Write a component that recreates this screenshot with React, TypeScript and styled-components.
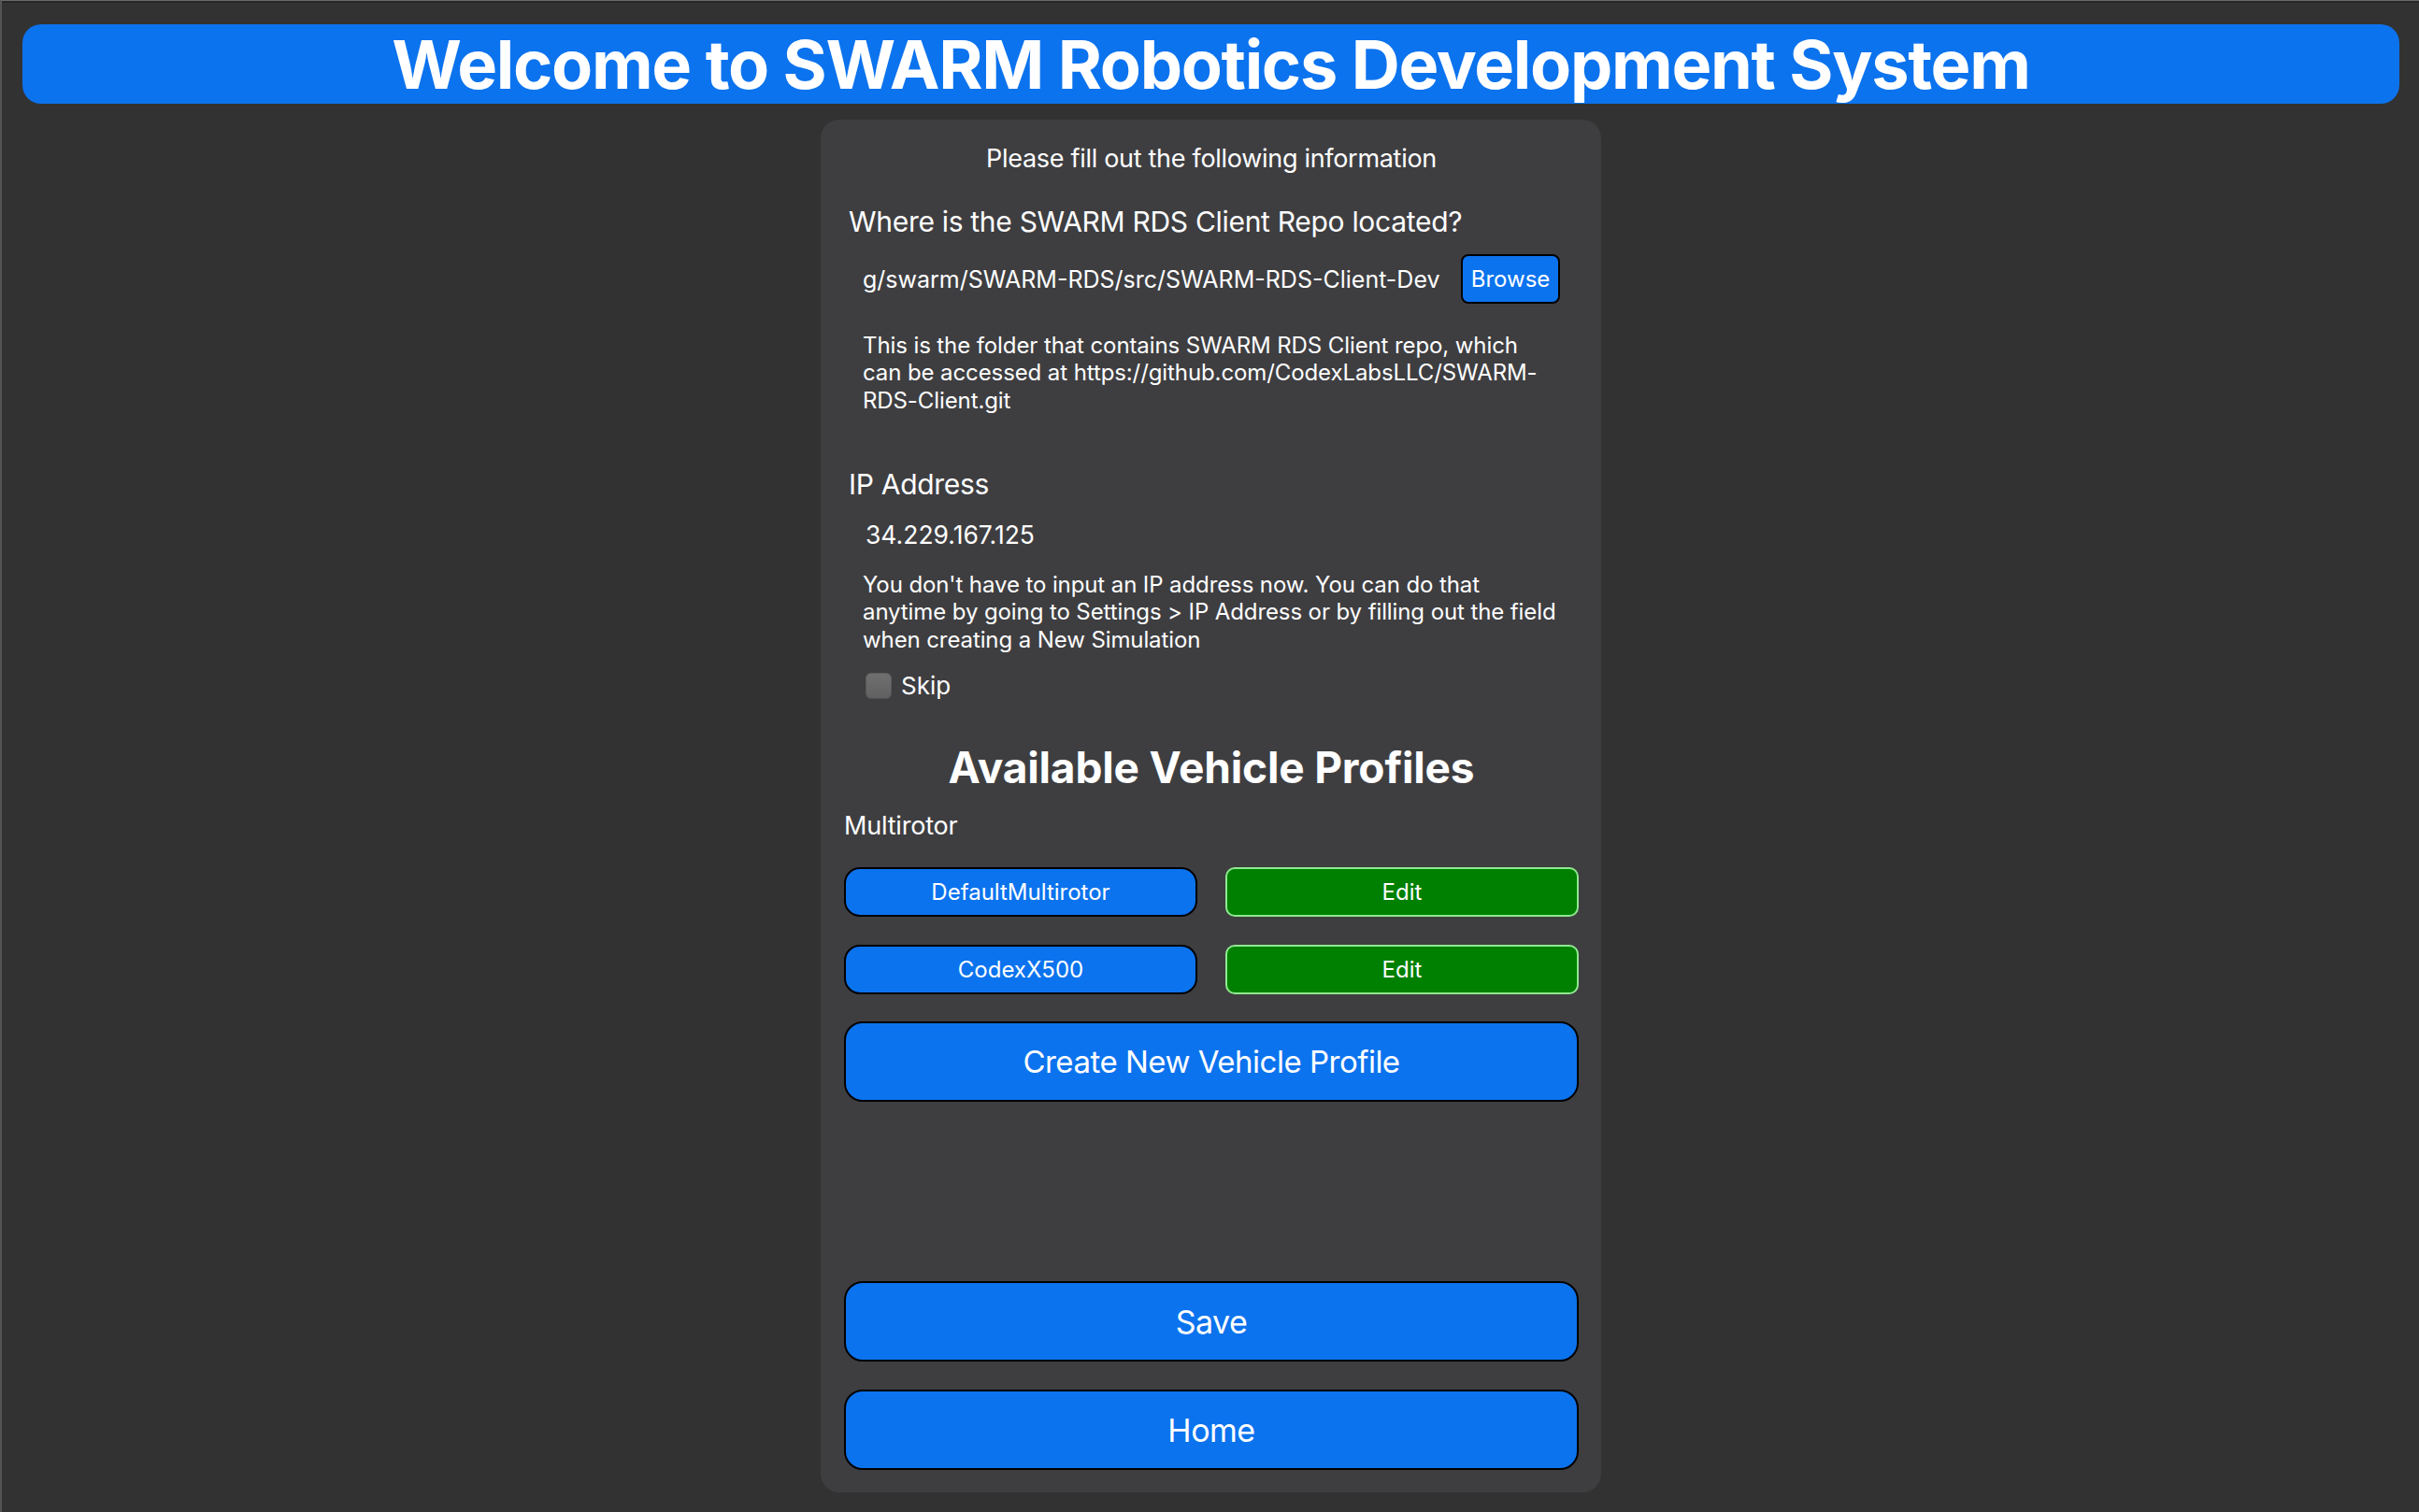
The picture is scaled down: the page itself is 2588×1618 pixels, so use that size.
import React from "react";
import styled, { createGlobalStyle } from "styled-components";

const GlobalStyle = createGlobalStyle`
  html, body {
    margin: 0;
    padding: 0;
    background: #323232;
  }
  body {
    font-family: Inter, "Liberation Sans", "DejaVu Sans", sans-serif;
    color: #ffffff;
    -webkit-font-smoothing: antialiased;
  }
  *, *::before, *::after {
    box-sizing: border-box;
  }
`;

const BLUE = "#0c73ee";

const Frame = styled.div`
  min-height: 100vh;
  background: #323232;
  border-top: 1px solid #6b6b6b;
  border-left: 2px solid #535353;
  box-shadow: inset 0 2px 0 #272727;
  padding: 25px 21px 0 22px;
  overflow: hidden;
`;

const Header = styled.header`
  height: 85px;
  border-radius: 20px;
  background: ${BLUE};
  display: flex;
  align-items: center;
  justify-content: center;
`;

const HeaderTitle = styled.h1`
  margin: 0;
  font-size: 72px;
  font-weight: 700;
  line-height: 85px;
  letter-spacing: -1.3px;
  color: #ffffff;
  white-space: nowrap;
`;

const Panel = styled.main`
  width: 835px;
  height: 1469px;
  margin: 17px auto 0;
  background: #3e3e41;
  border-radius: 20px;
  padding: 25px 24px 24px 25px;
  display: flex;
  flex-direction: column;
`;

const Intro = styled.p`
  margin: 0;
  font-size: 27px;
  line-height: 34px;
  letter-spacing: -0.3px;
  text-align: center;
`;

const FieldLabel = styled.h2<{ $mt: number }>`
  margin: ${(p) => p.$mt}px 0 0;
  padding-left: 5px;
  font-size: 30px;
  font-weight: 400;
  line-height: 38px;
  letter-spacing: -0.3px;
`;

const Indented = styled.div<{ $mt: number }>`
  margin-top: ${(p) => p.$mt}px;
  padding: 0 20px;
`;

const PathRow = styled.div`
  display: flex;
  align-items: center;
  gap: 20px;
  height: 53px;
`;

const PathText = styled.div`
  flex: 1;
  min-width: 0;
  font-size: 25px;
  line-height: 32px;
  white-space: nowrap;
`;

const BrowseButton = styled.button`
  flex: none;
  width: 106px;
  height: 53px;
  padding: 0;
  background: ${BLUE};
  border: 2px solid #000000;
  border-radius: 8px;
  color: #ffffff;
  font-family: inherit;
  font-size: 24px;
`;

const Hint = styled.p`
  margin: 0;
  font-size: 24px;
  line-height: 29.5px;
  letter-spacing: -0.1px;
  white-space: nowrap;
`;

const IpText = styled.div`
  margin-left: 3px;
  font-size: 26.5px;
  line-height: 32px;
`;

const CheckRow = styled.label`
  display: flex;
  align-items: center;
  gap: 10px;
  height: 28px;
  margin-left: 3px;
  font-size: 26px;
  line-height: 28px;
`;

const CheckBox = styled.span`
  width: 28px;
  height: 28px;
  border-radius: 6px;
  background: linear-gradient(#707070, #606060);
  box-shadow: inset 0 0 0 1px rgba(0, 0, 0, 0.15);
`;

const ProfilesTitle = styled.h2`
  margin: 45px 0 0;
  font-size: 46px;
  font-weight: 700;
  line-height: 56px;
  letter-spacing: -0.15px;
  text-align: center;
`;

const GroupLabel = styled.h3`
  margin: 18px 0 0;
  font-size: 27px;
  font-weight: 400;
  line-height: 34px;
  letter-spacing: -0.2px;
`;

const ProfileGrid = styled.div`
  margin-top: 27px;
  display: grid;
  grid-template-columns: 1fr 1fr;
  column-gap: 30px;
  row-gap: 30px;
`;

const ProfileButton = styled.button<{ $edit?: boolean }>`
  height: 53px;
  padding: 0;
  background: ${(p) => (p.$edit ? "#008000" : BLUE)};
  border: 2px solid ${(p) => (p.$edit ? "#8fe98f" : "#000000")};
  border-radius: ${(p) => (p.$edit ? "10px" : "17px")};
  color: #ffffff;
  font-family: inherit;
  font-size: 24px;
`;

const WideButton = styled.button<{ $mt: string; $fs: number }>`
  flex: none;
  margin-top: ${(p) => p.$mt};
  height: 86px;
  width: 100%;
  padding: 0;
  background: ${BLUE};
  border: 2px solid #000000;
  border-radius: 20px;
  color: #ffffff;
  font-family: inherit;
  font-size: ${(p) => p.$fs}px;
  letter-spacing: -0.5px;
`;

const profiles = ["DefaultMultirotor", "CodexX500"];

export default function App() {
  return (
    <>
      <GlobalStyle />
      <Frame>
        <Header>
          <HeaderTitle>Welcome to SWARM Robotics Development System</HeaderTitle>
        </Header>
        <Panel>
          <Intro>Please fill out the following information</Intro>

          <FieldLabel $mt={31}>Where is the SWARM RDS Client Repo located?</FieldLabel>
          <Indented $mt={16}>
            <PathRow>
              <PathText>g/swarm/SWARM-RDS/src/SWARM-RDS-Client-Dev</PathText>
              <BrowseButton>Browse</BrowseButton>
            </PathRow>
          </Indented>
          <Indented $mt={29.5}>
            <Hint>
              This is the folder that contains SWARM RDS Client repo, which
              <br />
              can be accessed at https://github.com/CodexLabsLLC/SWARM-
              <br />
              RDS-Client.git
            </Hint>
          </Indented>

          <FieldLabel $mt={56}>IP Address</FieldLabel>
          <Indented $mt={18.5}>
            <IpText>34.229.167.125</IpText>
          </Indented>
          <Indented $mt={23}>
            <Hint>
              You don't have to input an IP address now. You can do that
              <br />
              anytime by going to Settings &gt; IP Address or by filling out the field
              <br />
              when creating a New Simulation
            </Hint>
          </Indented>
          <Indented $mt={21}>
            <CheckRow>
              <CheckBox />
              <span>Skip</span>
            </CheckRow>
          </Indented>

          <ProfilesTitle>Available Vehicle Profiles</ProfilesTitle>
          <GroupLabel>Multirotor</GroupLabel>
          <ProfileGrid>
            {profiles.map((name) => (
              <React.Fragment key={name}>
                <ProfileButton>{name}</ProfileButton>
                <ProfileButton $edit>Edit</ProfileButton>
              </React.Fragment>
            ))}
          </ProfileGrid>
          <WideButton $mt="29px" $fs={33}>Create New Vehicle Profile</WideButton>

          <WideButton $mt="auto" $fs={34}>Save</WideButton>
          <WideButton $mt="30px" $fs={34}>Home</WideButton>
        </Panel>
      </Frame>
    </>
  );
}
